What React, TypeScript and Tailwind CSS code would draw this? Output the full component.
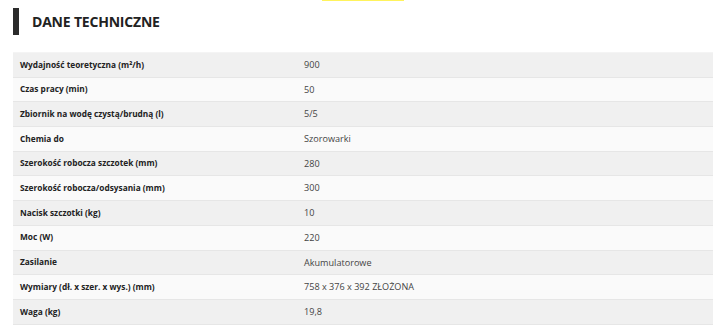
const specs: [string, string][] = [
  ['Wydajność teoretyczna (m²/h)', '900'],
  ['Czas pracy (min)', '50'],
  ['Zbiornik na wodę czystą/brudną (l)', '5/5'],
  ['Chemia do', 'Szorowarki'],
  ['Szerokość robocza szczotek (mm)', '280'],
  ['Szerokość robocza/odsysania (mm)', '300'],
  ['Nacisk szczotki (kg)', '10'],
  ['Moc (W)', '220'],
  ['Zasilanie', 'Akumulatorowe'],
  ['Wymiary (dł. x szer. x wys.) (mm)', '758 x 376 x 392 ZŁOŻONA'],
  ['Waga (kg)', '19,8'],
];

export default function App() {
  return (
    <div className="w-[716px] h-[327px] overflow-hidden bg-white font-['Open_Sans',sans-serif]">
      <div className="ml-[322px] w-[82px] h-[1px] bg-[#fff35c]" />
      <div className="flex items-center gap-[13px] pl-[13px] mt-[7px] h-[27px]">
        <div className="w-[6px] h-[27px] bg-[#2b2b2b]" />
        <h2 className="text-[14px] font-bold text-[#222] tracking-[-0.2px]">DANE TECHNICZNE</h2>
      </div>
      <div className="mt-[17px] ml-[13px] w-[700px] border-t border-[#f4f4f4]">
        {specs.map(([label, value], i) => (
          <div
            key={label}
            className={`flex items-center h-[24.7px] border-b border-[#e6e6e6] ${i % 2 === 0 ? 'bg-[#f0f0f0]' : 'bg-[#fafafa]'}`}
          >
            <div className="w-[284px] pl-[7px] text-[8.3px] font-bold text-[#222]">{label}</div>
            <div className="pl-[7px] text-[9.1px] text-[#444]">{value}</div>
          </div>
        ))}
      </div>
    </div>
  );
}
